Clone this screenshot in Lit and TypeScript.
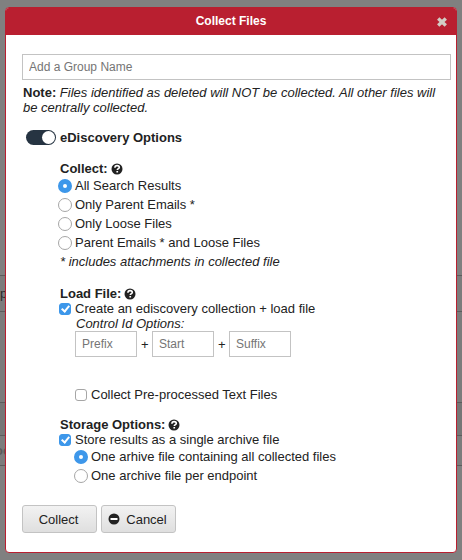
import { LitElement, html, css } from "lit";
import { customElement, state } from "lit/decorators.js";

const helpIcon = html`<svg class="glyph" viewBox="0 0 12 12" aria-hidden="true">
  <circle cx="6" cy="6" r="5.5" fill="#222"></circle>
  <path d="M3.9 4.7C3.9 3.3 4.8 2.6 6.1 2.6c1.3 0 2.2.7 2.2 1.8C8.300 5.700 6.300 5.700 6.300 7.100" fill="none" stroke="#fff" stroke-width="1.600"></path>
  <path d="M5.400 8h1.700v1.500H5.400z" fill="#fff"></path>
</svg>`;

const minusIcon = html`<svg class="glyph" viewBox="0 0 12 12" aria-hidden="true">
  <circle cx="6" cy="6" r="5.500" fill="#222"></circle>
  <path d="M2.500 5h7v2H2.500z" fill="#fff"></path>
</svg>`;

const closeIcon = html`<svg class="glyph" viewBox="0 0 12 12" aria-hidden="true">
  <path d="M2.200 2.500L9.800 9.500M9.800 2.500L2.200 9.500" stroke="#d3ccc4" stroke-width="3.400" fill="none"></path>
</svg>`;

@customElement("collect-dialog")
export class CollectDialog extends LitElement {
  @state() private collect = 0;
  @state() private archive = 0;

  static styles = css`
    :host { display: block; }
    * { box-sizing: border-box; }
    .dialog {
      border: 1px solid #b91f30;
      border-radius: 4px;
      background: #fff;
      color: #222;
      overflow: hidden;
    }
    .bar {
      display: grid;
      grid-template-columns: 20px 1fr 20px;
      align-items: center;
      height: 27px;
      background: #b91f30;
      color: #fff;
    }
    .title { grid-column: 2; margin: 0; padding-bottom: 2px; font-size: 12px; line-height: 16px; text-align: center; }
    .close { display: flex; padding: 0; border: 0; background: none; }
    .glyph { display: block; width: 12px; height: 12px; flex: none; }
    .body { padding: 19px 5px 19px 16px; }
    input, button { font: inherit; color: inherit; margin: 0; }
    .text {
      display: block;
      width: 100%;
      height: 26px;
      padding: 0 6px;
      border: 1px solid #c3c3c3;
      border-radius: 0;
      font-size: 12px;
      background: #fff;
    }
    .text::placeholder { color: #757575; opacity: 1; }
    .note { margin: 5px 0 0; padding-left: 1px; line-height: 15px; font-style: italic; }
    .note b { font-style: normal; }
    .switch-row { display: flex; align-items: center; gap: 4px; margin: 15px 0 0 4px; height: 15px; font-weight: bold; }
    .switch { appearance: none; width: 30px; height: 15px; padding: 1px; border-radius: 8px; background: #263442; }
    .switch::before { content: ""; display: block; width: 13px; height: 13px; border-radius: 50%; background: #fff; }
    .switch:checked::before { margin-left: auto; }
    .options { padding: 1px 0 0 36px; }
    fieldset { margin: 0; padding: 0; border: 0; min-width: 0; }
    legend { display: flex; align-items: center; gap: 3px; padding: 0 2px; height: 15px; font-weight: bold; }
    .group { margin-top: 15px; }
    .radio-row { display: flex; align-items: center; gap: 3px; height: 19px; }
    .radio { appearance: none; width: 14px; height: 14px; border: 1px solid #a6a6a6; border-radius: 50%; background: #fff; }
    .radio:checked { border: 5px solid #3d97ea; }
    .check-row { display: flex; align-items: center; gap: 4px; height: 15px; padding-left: 1px; }
    .check { appearance: none; display: grid; place-items: center; width: 12px; height: 12px; border: 1px solid #a6a6a6; border-radius: 3px; background: #fff; }
    .check:checked { border-color: #3d97ea; background: #3d97ea; }
    .check:checked::before {
      content: "";
      box-sizing: border-box;
      width: 5px;
      height: 8px;
      margin-bottom: 2px;
      border: solid #fff;
      border-width: 0 2px 2px 0;
      transform: rotate(40deg);
    }
    .footnote { margin: 0; padding-left: 2px; line-height: 19px; font-style: italic; }
    .nested { padding-left: 16px; }
    .sub { margin: 0; padding-left: 2px; line-height: 15px; font-style: italic; }
    .ids {
      display: grid;
      grid-template-columns: 62px 7px 62px 7px 62px;
      gap: 4px;
      align-items: center;
      padding-left: 1px;
    }
    .text-files { margin-top: 30px; }
    .buttons { display: flex; gap: 4px; margin-top: 20px; }
    .button {
      display: flex;
      align-items: center;
      justify-content: center;
      gap: 6px;
      width: 75px;
      height: 28px;
      padding: 0 2px 0 0;
      border: 1px solid #c3c3c3;
      border-radius: 3px;
      background: linear-gradient(#f2f2f2, #dfdfdf);
    }
  `;

  private radio(name: "collect" | "archive", label: string, i: number) {
    return html`<label class="radio-row">
      <input class="radio" type="radio" name=${name} .checked=${this[name] === i} @change=${() => (this[name] = i)} />${label}
    </label>`;
  }

  render() {
    return html`<section class="dialog" role="dialog" aria-labelledby="title">
      <header class="bar">
        <h1 class="title" id="title">Collect Files</h1>
        <button class="close" aria-label="Close">${closeIcon}</button>
      </header>
      <form class="body" @submit=${(e: Event) => e.preventDefault()}>
        <input class="text" type="text" placeholder="Add a Group Name" aria-label="Group name" />
        <p class="note"><b>Note:</b> Files identified as deleted will NOT be collected. All other files will be centrally collected.</p>
        <label class="switch-row"><input class="switch" type="checkbox" role="switch" checked />eDiscovery Options</label>
        <div class="options">
          <fieldset class="group">
            <legend>Collect: ${helpIcon}</legend>
            ${["All Search Results", "Only Parent Emails *", "Only Loose Files", "Parent Emails * and Loose Files"].map((t, i) => this.radio("collect", t, i))}
            <p class="footnote">* includes attachments in collected file</p>
          </fieldset>
          <fieldset class="group">
            <legend>Load File: ${helpIcon}</legend>
            <label class="check-row"><input class="check" type="checkbox" checked />Create an ediscovery collection + load file</label>
            <div class="nested">
              <p class="sub">Control Id Options:</p>
              <div class="ids">
                <input class="text" type="text" placeholder="Prefix" aria-label="Prefix" />
                <span>+</span>
                <input class="text" type="text" placeholder="Start" aria-label="Start" />
                <span>+</span>
                <input class="text" type="text" placeholder="Suffix" aria-label="Suffix" />
              </div>
              <label class="check-row text-files"><input class="check" type="checkbox" />Collect Pre-processed Text Files</label>
            </div>
          </fieldset>
          <fieldset class="group">
            <legend>Storage Options: ${helpIcon}</legend>
            <label class="check-row"><input class="check" type="checkbox" checked />Store results as a single archive file</label>
            <div class="nested">
              ${["One arhive file containing all collected files", "One archive file per endpoint"].map((t, i) => this.radio("archive", t, i))}
            </div>
          </fieldset>
        </div>
        <div class="buttons">
          <button class="button" type="submit">Collect</button>
          <button class="button" type="button">${minusIcon}Cancel</button>
        </div>
      </form>
    </section>`;
  }
}

@customElement("app-root")
export class AppRoot extends LitElement {
  static styles = css`
    :host {
      display: block;
      position: relative;
      box-sizing: border-box;
      min-height: 100vh;
      padding: 7px 5px;
      background: #808080;
      font: 13px/15px "Liberation Sans", Arial, sans-serif;
    }
    .page { position: absolute; inset: 0; padding-top: 275px; overflow: hidden; color: #2b2b2b; }
    .row { box-sizing: border-box; display: flex; align-items: center; border-top: 1px solid #5c5c5c; background: #7c7c7c; }
    .filters { height: 36px; }
    .blank { height: 91px; }
    .heading { height: 33px; background: #767676; }
    .record { height: 30px; color: #5a5a5a; font-weight: bold; text-indent: -5px; }
    .end { height: 1px; }
    .front { position: relative; display: block; }
  `;
  render() {
    return html`
      <div class="page" aria-hidden="true">
        <div class="row filters">p</div>
        <div class="row blank"></div>
        <div class="row heading"></div>
        <div class="row record">oc</div>
        <div class="row end"></div>
      </div>
      <collect-dialog class="front"></collect-dialog>`;
  }
}
